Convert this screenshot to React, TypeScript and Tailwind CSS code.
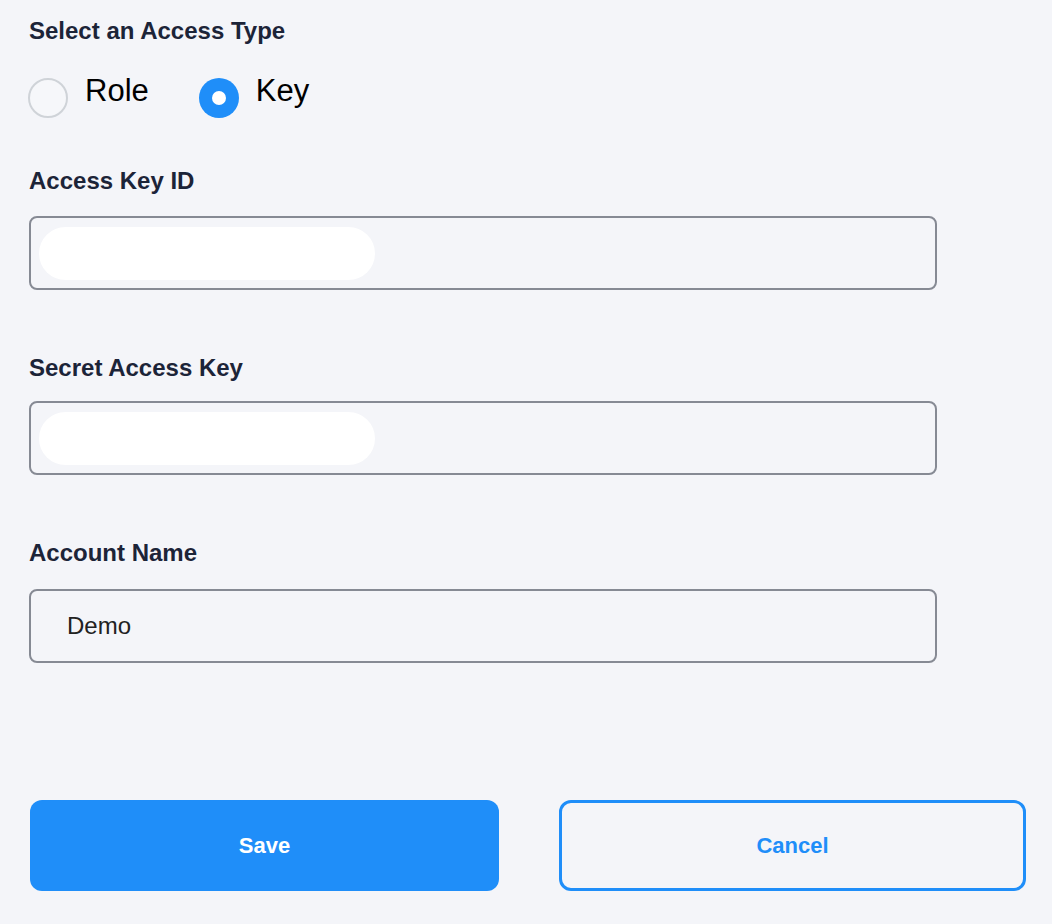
import React, { useState } from 'react';

const font = { fontFamily: '"Liberation Sans", Arial, sans-serif' };

function Radio({ label, checked, onClick }: { label: string; checked: boolean; onClick: () => void }) {
  return (
    <button type="button" onClick={onClick} className="flex items-center gap-[17px]">
      {checked ? (
        <span className="w-[40px] h-[40px] rounded-full bg-[#1f8ef9] flex items-center justify-center">
          <span className="w-[14px] h-[14px] rounded-full bg-white" />
        </span>
      ) : (
        <span className="w-[40px] h-[40px] rounded-full border-2 border-[#cfd3d8] bg-[#f6f7fa]" />
      )}
      {/* label sits a little above the circle's centre */}
      <span className="text-[31px] leading-[40px] text-black relative -top-[7px]">{label}</span>
    </button>
  );
}

function MaskedField() {
  return (
    <div className="w-[908px] h-[74px] border-2 border-[#868a94] rounded-[8px] flex items-center pl-[8px]">
      <div className="w-[336px] h-[53px] rounded-full bg-white" />
    </div>
  );
}

export default function App() {
  const [type, setType] = useState('key');
  const [name, setName] = useState('Demo');

  return (
    <div style={font} className="min-h-[924px] w-full bg-[#f4f5f9] pl-[29px] pt-[17px]">
      <h2 className="text-[24px] leading-[28px] font-bold text-[#1c2438]">Select an Access Type</h2>

      <div className="flex items-center gap-[50px] mt-[33px] -ml-[1px]">
        <Radio label="Role" checked={type === 'role'} onClick={() => setType('role')} />
        <Radio label="Key" checked={type === 'key'} onClick={() => setType('key')} />
      </div>

      <label className="block mt-[49px] text-[24px] leading-[28px] font-bold text-[#1c2438]">Access Key ID</label>
      <div className="mt-[21px]">
        <MaskedField />
      </div>

      <label className="block mt-[64px] text-[24px] leading-[28px] font-bold text-[#1c2438]">Secret Access Key</label>
      <div className="mt-[19px]">
        <MaskedField />
      </div>

      <label className="block mt-[64px] text-[24px] leading-[28px] font-bold text-[#1c2438]">Account Name</label>
      <div className="mt-[22px] w-[908px] h-[74px] border-2 border-[#868a94] rounded-[8px] flex items-center">
        <input
          value={name}
          onChange={(e) => setName(e.target.value)}
          className="w-full h-full bg-transparent pl-[36px] text-[24px] text-[#222] outline-none"
          style={font}
        />
      </div>

      <div className="flex gap-[60px] mt-[137px] ml-[1px]">
        <button className="w-[469px] h-[91px] rounded-[12px] bg-[#1f8ef9] text-white text-[22px] font-bold">
          Save
        </button>
        <button className="w-[467px] h-[91px] rounded-[12px] border-[3px] border-[#1f8ef9] text-[#1f8ef9] text-[22px] font-bold">
          Cancel
        </button>
      </div>
    </div>
  );
}
